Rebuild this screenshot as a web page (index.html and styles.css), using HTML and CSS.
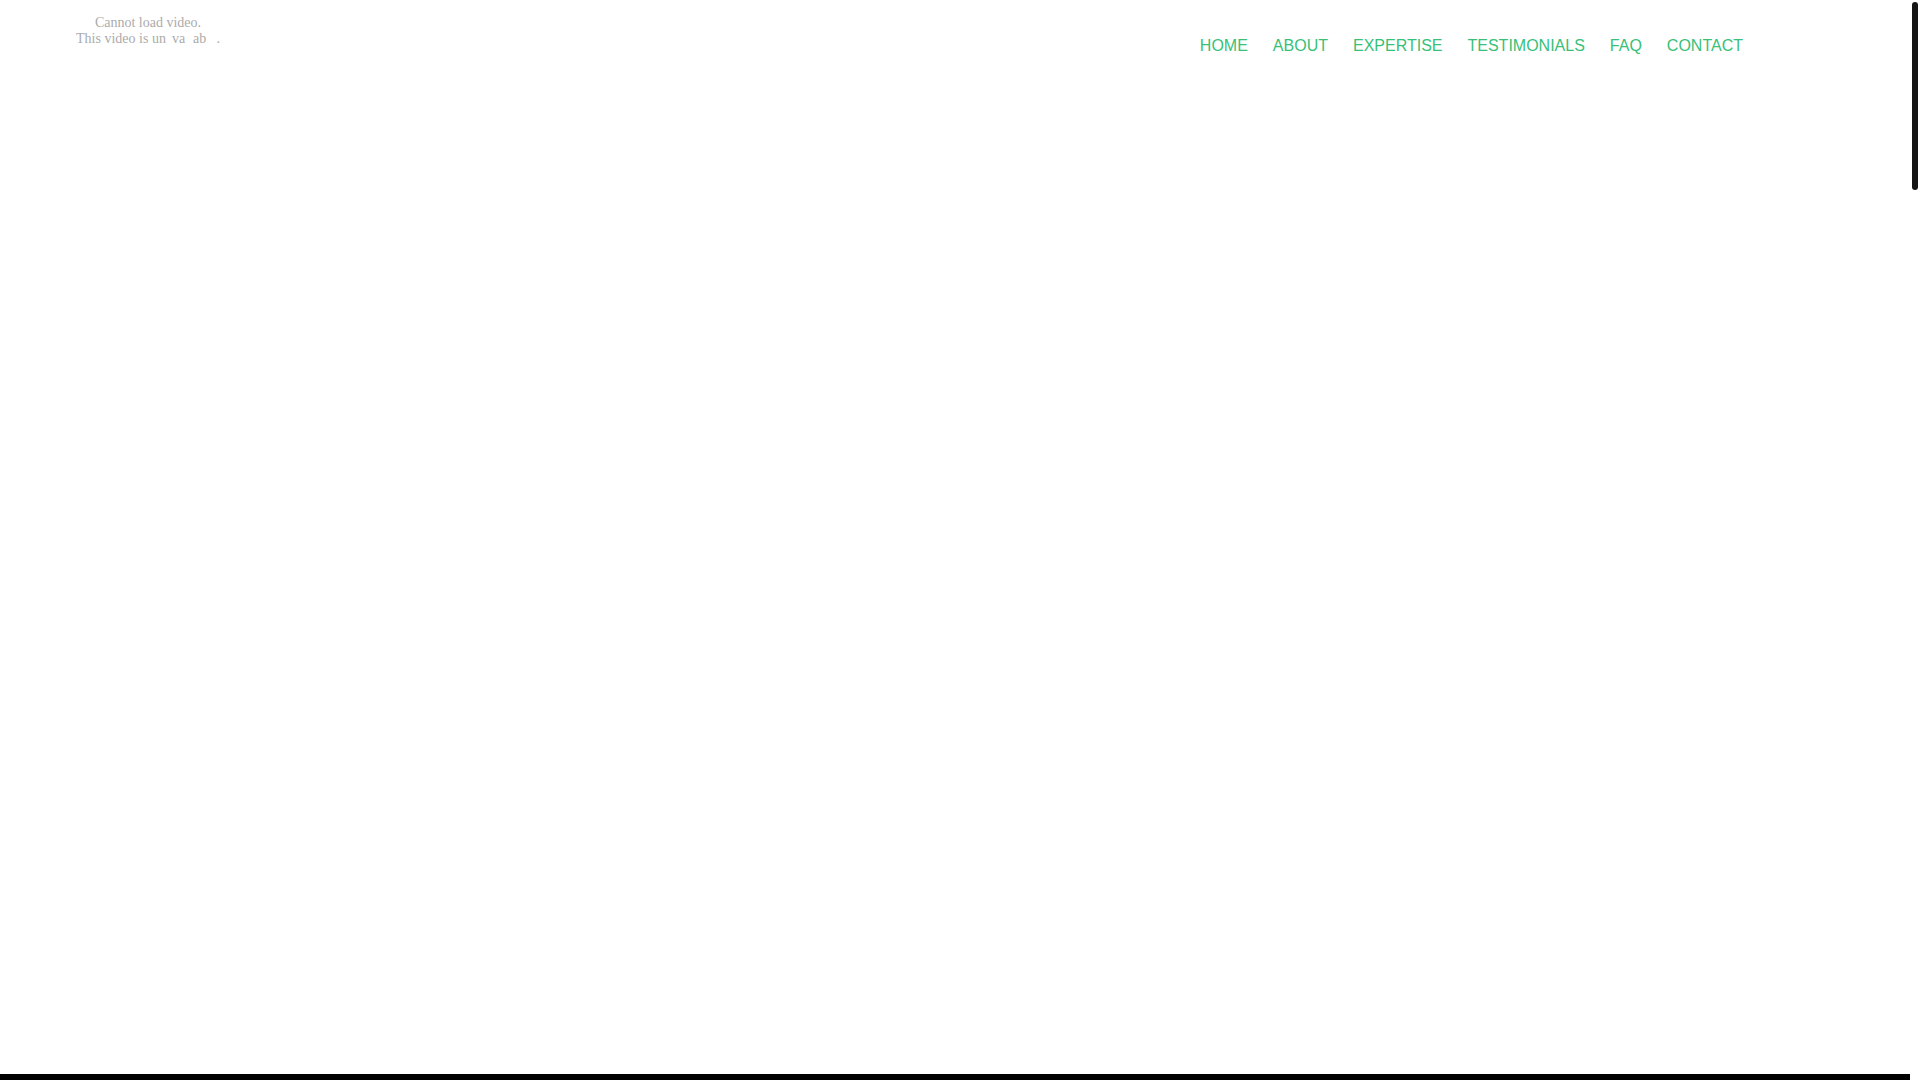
FILE: index.html
```html
<!DOCTYPE html>
<html lang="en">
<head>
<meta charset="utf-8">
<title>Home</title>
<link rel="stylesheet" href="styles.css">
</head>
<body>
<div class="frame">
  <div class="page">
    <header class="site-header">
      <div class="video-box">
        <div class="video-msg">Cannot load video.</div>
        <div class="video-msg">This video is un<span class="hid">a</span>va<span class="hid">il</span>ab<span class="hid">le</span>.</div>
      </div>
      <nav class="main-nav">
        <a href="#" class="nav-link">HOME</a>
        <a href="#" class="nav-link">ABOUT</a>
        <a href="#" class="nav-link">EXPERTISE</a>
        <a href="#" class="nav-link">TESTIMONIALS</a>
        <a href="#" class="nav-link">FAQ</a>
        <a href="#" class="nav-link">CONTACT</a>
      </nav>
    </header>
    <section class="hero"></section>
    <section class="dark-section"></section>
  </div>
  <div class="scroll-rail" aria-hidden="true">
    <div class="scroll-thumb"></div>
  </div>
</div>
</body>
</html>
```

FILE: styles.css
```css
html, body {
  margin: 0;
  height: 100%;
  overflow: hidden;
  background: #ffffff;
}
body {
  font-family: "Liberation Sans", Arial, sans-serif;
}
.frame {
  display: flex;
  height: 100vh;
}
.page {
  flex: 1;
  min-width: 0;
  overflow: hidden;
}
.scroll-rail {
  width: 10px;
  flex: none;
  background: #ffffff;
  padding: 2px;
  box-sizing: border-box;
}
.scroll-thumb {
  height: 188px;
  background: #151515;
  border-radius: 3px;
}
.site-header {
  display: flex;
  align-items: flex-start;
  height: 80px;
}
.video-box {
  width: 296px;
  padding-top: 15px;
  text-align: center;
  font-family: "Liberation Serif", "Times New Roman", serif;
  font-size: 14px;
  color: #ababab;
}
.hid {
  color: #ffffff;
}
.main-nav {
  display: flex;
  gap: 25px;
  margin-left: auto;
  padding-right: 167px;
  padding-top: 37px;
}
.nav-link {
  font-size: 16px;
  color: #38bf78;
  text-decoration: none;
}
.hero {
  height: 994px;
}
.dark-section {
  height: 5100px;
  background: #000000;
}
```
